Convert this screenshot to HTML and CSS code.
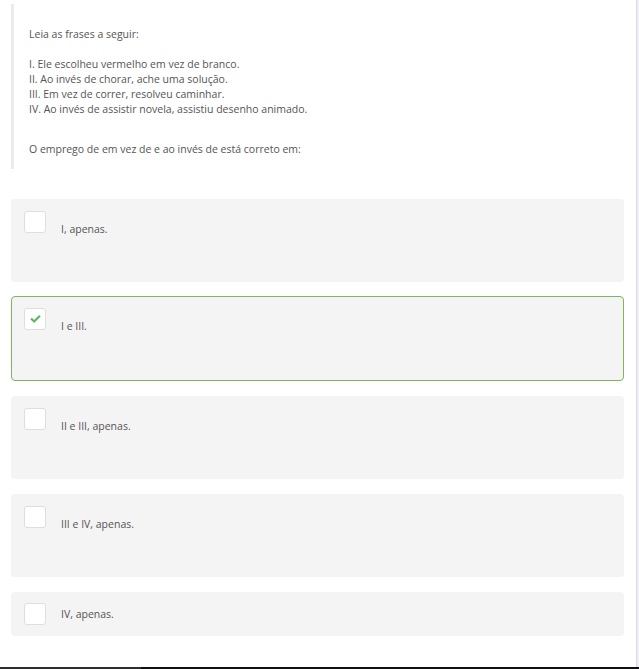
FILE: index.html
```html
<!DOCTYPE html>
<html lang="pt">
<head>
<meta charset="utf-8">
<title>Questão</title>
<link rel="stylesheet" href="styles.css">
</head>
<body>
<div class="page">
  <main class="main">
    <div class="question">
      <p class="q-intro">Leia as frases a seguir:</p>
      <p class="q-list">I. Ele escolheu vermelho em vez de branco.<br>II. Ao invés de chorar, ache uma solução.<br>III. Em vez de correr, resolveu caminhar.<br>IV. Ao invés de assistir novela, assistiu desenho animado.</p>
      <p class="q-ask">O emprego de em vez de e ao invés de está correto em:</p>
    </div>
    <div class="options">
      <div class="option">
        <span class="box"></span>
        <span class="label">I, apenas.</span>
      </div>
      <div class="option selected">
        <span class="box"><svg class="check" viewBox="0 0 11 8" width="11" height="8"><path d="M0.3 4.3 L1.9 2.7 L4.1 4.9 L9.1 0 L10.7 1.6 L4.1 8 Z" fill="#5cb85c"/></svg></span>
        <span class="label">I e III.</span>
      </div>
      <div class="option">
        <span class="box"></span>
        <span class="label">II e III, apenas.</span>
      </div>
      <div class="option">
        <span class="box"></span>
        <span class="label">III e IV, apenas.</span>
      </div>
      <div class="option short">
        <span class="box"></span>
        <span class="label">IV, apenas.</span>
      </div>
    </div>
  </main>
  <div class="rail"></div>
</div>
<div class="taskbar"><div class="taskbar-left"></div></div>
</body>
</html>
```

FILE: styles.css
```css
html, body {
  margin: 0;
  padding: 0;
  background: #ffffff;
}
body {
  font-family: "Open Sans", "Liberation Sans", sans-serif;
  font-size: 10.5px;
  color: #555555;
  width: 639px;
  height: 669px;
  overflow: hidden;
  display: flex;
  flex-direction: column;
}
.page {
  display: flex;
  flex: 1;
  min-height: 0;
}
.main {
  flex: 1;
  padding-top: 4px;
}
.rail {
  width: 2px;
  border-left: 1px solid #dcdce0;
  background: #ececf4;
}
.question {
  margin-left: 11px;
  border-left: 3px solid #ebebeb;
  padding: 23px 0 12px 15px;
  line-height: 15px;
}
.question p {
  margin: 0;
}
.q-list {
  margin-top: 15px !important;
}
.q-ask {
  margin-top: 25px !important;
}
.options {
  margin: 30px 12px 0 11px;
  display: flex;
  flex-direction: column;
  gap: 15px;
}
.option {
  background: #f4f4f4;
  border-radius: 4px;
  height: 83px;
  box-sizing: border-box;
  padding: 12px 13px;
  display: flex;
  align-items: flex-start;
  gap: 15px;
}
.option.selected {
  border: 1px solid #7db65c;
  height: 85px;
  padding: 11px 12px;
  margin-top: -1px;
}
.option.short {
  height: 44px;
  align-items: center;
  padding: 11px 13px;
}
.box {
  width: 22px;
  height: 22px;
  box-sizing: border-box;
  background: #ffffff;
  border: 1px solid #dedede;
  border-radius: 3px;
  display: flex;
  align-items: center;
  justify-content: center;
  flex: none;
}
.label {
  line-height: 15px;
  margin-top: 11px;
}
.option.short .label {
  margin-top: 0;
}
.taskbar {
  height: 2px;
  background: #101010;
  flex: none;
}
.taskbar-left {
  width: 141px;
  height: 100%;
  background: #2e2e2e;
}
```
